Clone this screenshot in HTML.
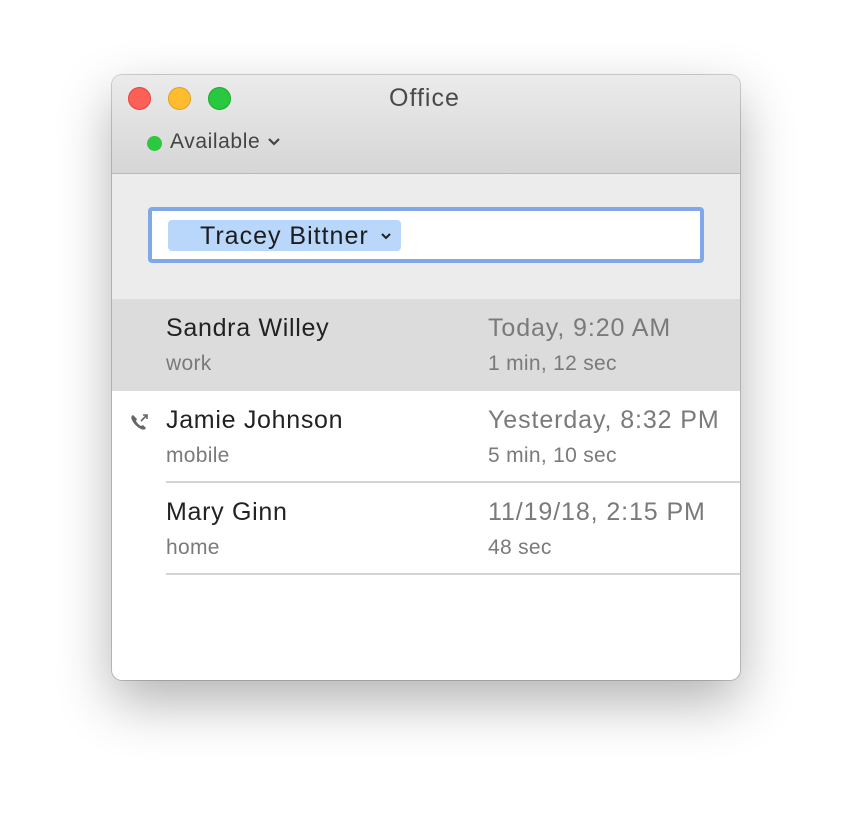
<!DOCTYPE html>
<html><head><style>
body{margin:0;width:852px;height:828px;background:#fff;font-family:"Liberation Sans",sans-serif;position:relative;overflow:hidden}
.win{position:absolute;left:112px;top:75px;width:628px;height:605px;border-radius:10px;background:#fff;overflow:hidden;box-shadow:0 22px 55px rgba(0,0,0,.3),0 0 0 1px rgba(0,0,0,.18)}
.tb{position:absolute;left:0;top:0;width:628px;height:98px;background:linear-gradient(#ebebeb,#d6d6d6);border-bottom:1px solid #b9b9b9}
.dot{position:absolute;top:12px;width:23px;height:23px;border-radius:50%;box-sizing:border-box}
.t{position:absolute;font-size:24px;color:#4a4a4a}
.srch{position:absolute;left:0;top:99px;width:628px;height:125px;background:#ececec;border-bottom:1px solid #dadada}
.row{position:absolute;left:0;width:628px;height:92px}
.nm{position:absolute;left:54px;top:15px;font-size:25px;color:#222;letter-spacing:0.7px}
.sb{position:absolute;left:54px;top:53px;font-size:21px;color:#7a7a7a;letter-spacing:0.3px}
.tm{position:absolute;left:376px;top:15px;font-size:25px;color:#7a7a7a;white-space:nowrap;letter-spacing:0.9px}
.du{position:absolute;left:376px;top:53px;font-size:21px;color:#7a7a7a;letter-spacing:0.3px}
.ln{position:absolute;left:54px;right:0;bottom:0;height:2px;background:#d4d4d4}
</style></head><body>
<div class="win">
 <div class="tb">
  <div class="dot" style="left:16px;background:#fe5f57;border:1px solid #e0443e"></div>
  <div class="dot" style="left:56px;background:#febc2e;border:1px solid #dea123"></div>
  <div class="dot" style="left:96px;background:#28c840;border:1px solid #1aab29"></div>
  <div class="t" style="left:277px;top:9px;font-size:25px;letter-spacing:1px">Office</div>
  <div style="position:absolute;left:35px;top:61px;width:15px;height:15px;border-radius:50%;background:#2bc840"></div>
  <div class="t" style="left:58px;top:55px;font-size:21px;color:#444;letter-spacing:0.6px">Available</div>
  <svg style="position:absolute;left:155px;top:62px" width="14" height="10"><path d="M2 2l5 5 5-5" stroke="#444" stroke-width="2.2" fill="none"/></svg>
 </div>
 <div class="srch">
  <div style="position:absolute;left:36px;top:33px;width:556px;height:56px;box-sizing:border-box;border:4px solid #7fa8ea;border-radius:4px;background:#fff"></div>
  <div style="position:absolute;left:56px;top:46px;width:233px;height:31px;background:#b9d6fb;border-radius:4px"></div>
  <div style="position:absolute;left:88px;top:48px;font-size:25px;color:#1d1d1d;letter-spacing:1px">Tracey Bittner</div>
  <svg style="position:absolute;left:268px;top:58px" width="12" height="9"><path d="M2 2l4 4 4-4" stroke="#222" stroke-width="2" fill="none"/></svg>
 </div>
 <div class="row" style="top:224px;background:#dcdcdc">
  <div class="nm">Sandra Willey</div><div class="sb">work</div>
  <div class="tm">Today, 9:20 AM</div><div class="du">1 min, 12 sec</div>
 </div>
 <div class="row" style="top:316px">
  <svg style="position:absolute;left:17px;top:22px" width="22" height="20" viewBox="0 0 22 20"><path d="M4 2c-2 1-2 3-1 5 2 4 5 7 9 9 2 1 4 1 5-1l-3-3-2 1c-2-1-4-3-5-5l1-2z" fill="#666"/><path d="M12 8l6-6M14 2h4v4" stroke="#666" stroke-width="1.6" fill="none"/></svg>
  <div class="nm">Jamie Johnson</div><div class="sb">mobile</div>
  <div class="tm">Yesterday, 8:32 PM</div><div class="du">5 min, 10 sec</div>
  <div class="ln"></div>
 </div>
 <div class="row" style="top:408px">
  <div class="nm">Mary Ginn</div><div class="sb">home</div>
  <div class="tm">11/19/18, 2:15 PM</div><div class="du">48 sec</div>
  <div class="ln"></div>
 </div>
</div>
</body></html>
